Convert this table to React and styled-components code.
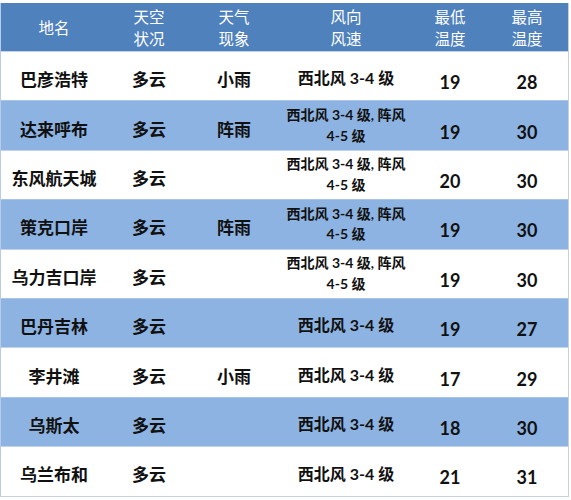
import React from "react";
import styled, { createGlobalStyle } from "styled-components";

const GlobalStyle = createGlobalStyle`
  body {
    margin: 0;
    background: #ffffff;
    font-family: "Lato", "Noto Sans CJK SC", sans-serif;
  }
`;

const COLS = "106px 84px 86px 138px 70px 84px";

const Page = styled.div`
  padding-top: 3px;
`;

const Table = styled.div`
  width: 569px;
  box-sizing: border-box;
  border-left: 1px solid #b9cbe6;
  border-right: 1px solid #c8d0da;
  border-bottom: 1px solid #c8d0da;
`;

const HeaderRow = styled.div`
  display: grid;
  grid-template-columns: ${COLS};
  height: 48px;
  background: #4f81bd;
  color: #ffffff;
`;

const HeadCell = styled.div`
  display: flex;
  flex-direction: column;
  align-items: center;
  justify-content: center;
  text-align: center;
  font-family: "Noto Sans CJK SC", sans-serif;
  font-size: 15.5px;
  line-height: 22.5px;
  font-weight: 400;
`;

const Row = styled.div`
  display: grid;
  grid-template-columns: ${COLS};
  height: 49.4px;
  box-sizing: border-box;
  background: ${(p) => (p.$band ? "#8db3e2" : "#ffffff")};
  border-top: 1px solid ${(p) => (p.$band ? "#a9c4e8" : "#c3d3ea")};
  color: #111111;
`;

const Cell = styled.div`
  display: flex;
  align-items: center;
  justify-content: center;
  text-align: center;
  font-family: "Noto Sans CJK SC", sans-serif;
  font-weight: 700;
  font-size: 17px;
  padding-top: 5px;
`;

const Wind = styled.div`
  display: flex;
  flex-direction: column;
  align-items: center;
  justify-content: center;
  font-family: "Lato", "Noto Sans CJK SC", sans-serif;
  font-weight: 700;
  font-size: ${(p) => (p.$small ? "14px" : "16px")};
  line-height: 20.5px;
  padding-top: ${(p) => (p.$small ? "0" : "5px")};
`;

const Num = styled.div`
  display: flex;
  align-items: center;
  justify-content: center;
  font-family: "Lato", sans-serif;
  font-weight: 700;
  font-size: 18px;
  padding-top: 12px;
`;

const headers = [
  ["地名"],
  ["天空", "状况"],
  ["天气", "现象"],
  ["风向", "风速"],
  ["最低", "温度"],
  ["最高", "温度"],
];

const gust = ["西北风 3-4 级, 阵风", "4-5 级"];
const plain = ["西北风 3-4 级"];

const rows = [
  { name: "巴彦浩特", sky: "多云", weather: "小雨", wind: plain, low: 19, high: 28 },
  { name: "达来呼布", sky: "多云", weather: "阵雨", wind: gust, low: 19, high: 30 },
  { name: "东风航天城", sky: "多云", weather: "", wind: gust, low: 20, high: 30 },
  { name: "策克口岸", sky: "多云", weather: "阵雨", wind: gust, low: 19, high: 30 },
  { name: "乌力吉口岸", sky: "多云", weather: "", wind: gust, low: 19, high: 30 },
  { name: "巴丹吉林", sky: "多云", weather: "", wind: plain, low: 19, high: 27 },
  { name: "李井滩", sky: "多云", weather: "小雨", wind: plain, low: 17, high: 29 },
  { name: "乌斯太", sky: "多云", weather: "", wind: plain, low: 18, high: 30 },
  { name: "乌兰布和", sky: "多云", weather: "", wind: plain, low: 21, high: 31 },
];

export default function App() {
  return (
    <Page>
      <GlobalStyle />
      <Table>
        <HeaderRow>
          {headers.map((lines, i) => (
            <HeadCell key={i}>
              {lines.map((l) => (
                <span key={l}>{l}</span>
              ))}
            </HeadCell>
          ))}
        </HeaderRow>
        {rows.map((r, i) => (
          <Row key={r.name} $band={i % 2 === 1}>
            <Cell>{r.name}</Cell>
            <Cell>{r.sky}</Cell>
            <Cell>{r.weather}</Cell>
            <Wind $small={r.wind.length > 1}>
              {r.wind.map((l) => (
                <span key={l}>{l}</span>
              ))}
            </Wind>
            <Num>{r.low}</Num>
            <Num>{r.high}</Num>
          </Row>
        ))}
      </Table>
    </Page>
  );
}
